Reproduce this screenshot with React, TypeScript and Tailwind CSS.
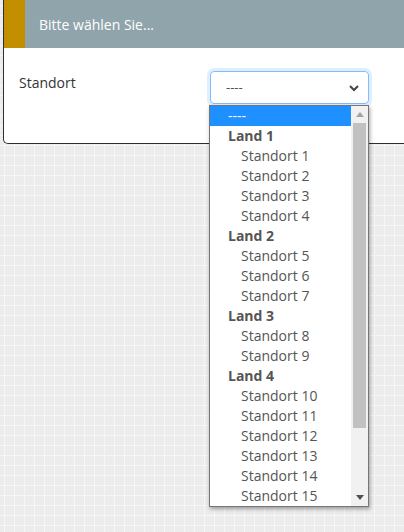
import React from 'react';

const groups = [
  { land: 'Land 1', orte: [1, 2, 3, 4] },
  { land: 'Land 2', orte: [5, 6, 7] },
  { land: 'Land 3', orte: [8, 9] },
  { land: 'Land 4', orte: [10, 11, 12, 13, 14, 15] },
];

const App = () => {
  return (
    <div
      className="relative w-[404px] h-[532px] overflow-hidden bg-[#ececec] bg-[linear-gradient(to_right,#f6f6f6_1px,transparent_1px),linear-gradient(to_bottom,#f6f6f6_1px,transparent_1px)] bg-[size:10px_10px] bg-[position:4px_5px]"
      style={{ fontFamily: '"Open Sans", "Liberation Sans", sans-serif' }}
    >
      {/* Card */}
      <div className="ml-[3px] w-[420px] h-[144px] bg-white border-l border-b border-[#2b2f33] rounded-bl-[5px] overflow-hidden">
        <div className="flex h-[48px] bg-[#90a4ab]">
          <div className="w-[21px] bg-[#c38f00]" />
          <div className="pl-[14px] flex items-center text-[14px] text-white">Bitte wählen Sie...</div>
        </div>
        <div className="flex pl-[15px] pt-[25px]">
          <div className="w-[191px] text-[14px] text-[#333] leading-[20px]">Standort</div>
          <div className="w-[159px] h-[33px] -mt-[2px] flex items-center justify-between pl-[15px] pr-[8px] rounded-[4px] border border-[#80bdff] shadow-[0_0_0_3px_rgba(0,123,255,0.12)] text-[13px] text-[#495057]">
            <span>----</span>
            <svg width="12" height="12" viewBox="0 0 12 12">
              <path d="M2 4 L6 8 L10 4" fill="none" stroke="#444" strokeWidth="2" />
            </svg>
          </div>
        </div>
      </div>

      {/* Open listbox */}
      <div className="absolute left-[209px] top-[105px] w-[160px] h-[402px] bg-white border border-[#767676] shadow-[1px_2px_4px_rgba(0,0,0,0.35)] flex text-[14px] leading-[20px] text-[#555]">
        <div className="flex-1 flex flex-col">
          <div className="h-[20px] pl-[18px] bg-[#1e90ff] text-white">----</div>
          {groups.map(g => (
            <React.Fragment key={g.land}>
              <div className="h-[20px] pl-[18px] font-bold">{g.land}</div>
              {g.orte.map(n => (
                <div key={n} className="h-[20px] pl-[31px]">Standort {n}</div>
              ))}
            </React.Fragment>
          ))}
        </div>
        <div className="w-[17px] bg-[#f1f1f1] flex flex-col items-center">
          <div className="h-[17px] flex items-center justify-center">
            <svg width="8" height="5" viewBox="0 0 8 5"><path d="M0 5 L4 0 L8 5 Z" fill="#a3a3a3" /></svg>
          </div>
          <div className="w-[13px] h-[305px] bg-[#c1c1c1]" />
          <div className="flex-1" />
          <div className="h-[17px] flex items-center justify-center">
            <svg width="8" height="5" viewBox="0 0 8 5"><path d="M0 0 L4 5 L8 0 Z" fill="#505050" /></svg>
          </div>
        </div>
      </div>
    </div>
  );
};

export default App;
